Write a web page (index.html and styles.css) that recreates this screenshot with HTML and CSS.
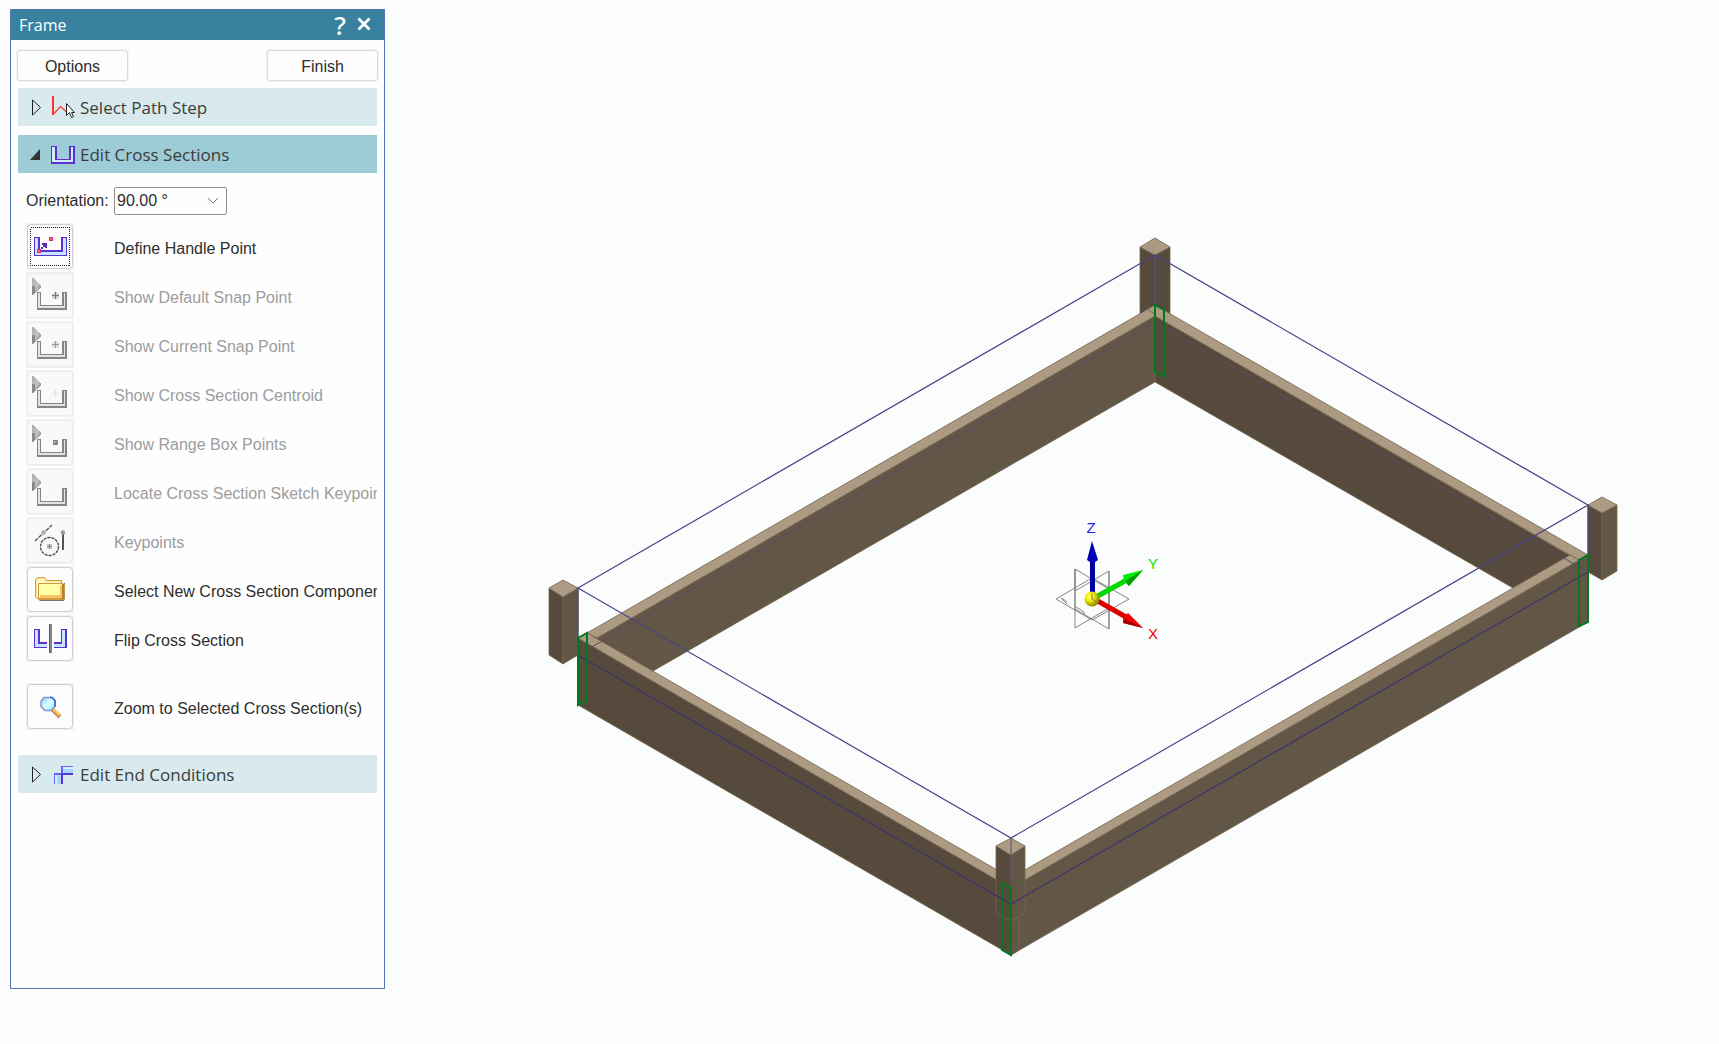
FILE: index.html
```html
<!DOCTYPE html>
<html lang="en">
<head>
<meta charset="utf-8">
<title>Frame</title>
<link rel="stylesheet" href="styles.css">
</head>
<body>
<svg class="defs" aria-hidden="true">
  <defs>
    <linearGradient id="cone" x1="0" x2="1" y1="0" y2="1">
      <stop offset="0" stop-color="#aaa"/><stop offset=".5" stop-color="#c4c4c4"/><stop offset="1" stop-color="#777"/>
    </linearGradient>
    <radialGradient id="ball" cx=".35" cy=".35" r=".7">
      <stop offset="0" stop-color="#ffff70"/><stop offset=".4" stop-color="#f2ee00"/><stop offset="1" stop-color="#857c00"/>
    </radialGradient>
    <linearGradient id="lens" x1="0" x2="1" y1="0" y2="1">
      <stop offset="0" stop-color="#8fd0ff"/><stop offset=".5" stop-color="#d8ffff"/><stop offset="1" stop-color="#8ee8ff"/>
    </linearGradient>
    <symbol id="channel" viewBox="0 0 48 47">
      <path d="M6 6h1l8 8v1l-8 8H6z" fill="url(#cone)"/>
      <path d="M6 14h3v6l-2 3H6z" fill="#8a8a8a"/>
      <path d="M11 20h4v13h21V20h5v18H11z" fill="#858585"/>
      <path d="M12 21h2v13h24V21h1v15H12z" fill="#e4e4e4"/>
    </symbol>
  </defs>
</svg>

<main class="workspace">
  <aside class="panel" aria-label="Frame">
    <header class="titlebar">
      <h1 class="title">Frame</h1>
      <button class="title-button" type="button" aria-label="Help"><span class="help">?</span></button>
      <button class="title-button" type="button" aria-label="Close">
        <svg width="14" height="14" viewBox="0 0 14 14"><path d="M1.500 1.500l11 11M12.500 1.500l-11 11" stroke="#fff" stroke-width="2.800"/></svg>
      </button>
    </header>

    <div class="actions">
      <button class="action" type="button">Options</button>
      <button class="action" type="button">Finish</button>
    </div>

    <div class="steps">
      <button class="step" type="button" aria-expanded="false">
        <svg width="12" height="20" viewBox="0 0 12 20"><path d="M2.500 3v15l8-7.500z" fill="none" stroke="#222"/></svg>
        <svg width="26" height="24" viewBox="0 0 26 24">
          <path d="M2 1h2v19H2z" fill="#ff3030"/>
          <path d="M4 18.500l6.500-7 5.500 5" fill="none" stroke="#ff3030" stroke-width="1.200"/>
          <path d="M16.500 8.500v12l3-3 2 5 2-1-2-4h3z" fill="#fff" stroke="#222"/>
        </svg>
        <span>Select Path Step</span>
      </button>

      <section class="group">
        <button class="step step-open" type="button" aria-expanded="true">
          <svg width="12" height="20" viewBox="0 0 12 20"><path d="M10 5v11H0z" fill="#333"/></svg>
          <svg width="26" height="24" viewBox="0 0 26 24" shape-rendering="crispEdges">
            <path d="M1 4h6v13h12V4h6v18H1z" fill="#5a32d2"/>
            <path d="M2 5h3v13h16V5h2v15H2z" fill="#cdecff"/>
          </svg>
          <span>Edit Cross Sections</span>
        </button>

        <div class="field">
          <label for="orientation">Orientation:</label>
          <div class="combo">
            <select id="orientation"><option>90.00 °</option><option>0.00 °</option></select>
            <svg width="12" height="8" viewBox="0 0 12 8" aria-hidden="true"><path d="M1 1l5 5 5-5" fill="none" stroke="#777"/></svg>
          </div>
        </div>

        <ul class="tools">
          <li class="tool">
            <button class="tool-button" id="t1" type="button" aria-labelledby="l1">
              <svg viewBox="0 0 48 47" shape-rendering="crispEdges">
                <rect x="4.500" y="4.500" width="39" height="38" fill="none" stroke="#222" stroke-dasharray="1 1"/>
                <path d="M8 14h6v13h21V14h6v19H8z" fill="#5a32d2"/>
                <path d="M9 15h3v14h25V15h3v17H9z" fill="#c4e6ff"/>
                <path d="M23 14h4v4h-4zM11 26h4v4h-4z" fill="#c8328c"/>
                <path d="M24 15h2v2h-2zM12 27h2v2h-2z" fill="#f06464"/>
                <path d="M15 24h2v2h-2zM17 22h2v2h-2zM16 20h5v5h-2v-2h-1v-1h-2z" fill="#5a2db4"/>
              </svg>
            </button>
            <label class="tool-label" id="l1" for="t1">Define Handle Point</label>
          </li>
          <li class="tool">
            <button class="tool-button" id="t2" type="button" aria-labelledby="l2" disabled>
              <svg viewBox="0 0 48 47" shape-rendering="crispEdges"><use href="#channel"/>
                <circle cx="29.500" cy="23.500" r="3.500" fill="#d0d0d0"/><path d="M29 20h1v3h3v1h-3v3h-1v-3h-3v-1h3z" fill="#777"/></svg>
            </button>
            <label class="tool-label" id="l2" for="t2">Show Default Snap Point</label>
          </li>
          <li class="tool">
            <button class="tool-button" id="t3" type="button" aria-labelledby="l3" disabled>
              <svg viewBox="0 0 48 47" shape-rendering="crispEdges"><use href="#channel"/>
                <circle cx="29.500" cy="23.500" r="3.500" fill="#dcdcdc"/><path d="M29 20h1v3h3v1h-3v3h-1v-3h-3v-1h3z" fill="#999"/></svg>
            </button>
            <label class="tool-label" id="l3" for="t3">Show Current Snap Point</label>
          </li>
          <li class="tool">
            <button class="tool-button" id="t4" type="button" aria-labelledby="l4" disabled>
              <svg viewBox="0 0 48 47" shape-rendering="crispEdges"><use href="#channel"/>
                <path d="M29 20h1v3h3v1h-3v3h-1v-3h-3v-1h3z" fill="#e0e0e0"/></svg>
            </button>
            <label class="tool-label" id="l4" for="t4">Show Cross Section Centroid</label>
          </li>
          <li class="tool">
            <button class="tool-button" id="t5" type="button" aria-labelledby="l5" disabled>
              <svg viewBox="0 0 48 47" shape-rendering="crispEdges"><use href="#channel"/>
                <path d="M27 21h5v5h-5z" fill="#858585"/><path d="M28 22h2v2h-2z" fill="#aaa"/></svg>
            </button>
            <label class="tool-label" id="l5" for="t5">Show Range Box Points</label>
          </li>
          <li class="tool">
            <button class="tool-button" id="t6" type="button" aria-labelledby="l6" disabled>
              <svg viewBox="0 0 48 47" shape-rendering="crispEdges"><use href="#channel"/></svg>
            </button>
            <label class="tool-label" id="l6" for="t6">Locate Cross Section Sketch Keypoints</label>
          </li>
          <li class="tool">
            <button class="tool-button" id="t7" type="button" aria-labelledby="l7" disabled>
              <svg viewBox="0 0 48 47">
                <path d="M9 24L26 8" stroke="#555" stroke-width="1.300" stroke-dasharray="4 1"/>
                <circle cx="23.500" cy="29.500" r="9" fill="none" stroke="#444" stroke-width="1.300" stroke-dasharray="3 1"/>
                <path d="M21 27h5v5h-5z" fill="#ccc"/><path d="M23 27h1v5h-1zM21 29h5v1h-5z" fill="#888"/>
                <circle cx="17.500" cy="15.500" r="2.200" fill="#aaa"/>
                <path d="M36 17h2v16h-2z" fill="#555"/><circle cx="37" cy="15.500" r="2.200" fill="#999"/>
              </svg>
            </button>
            <label class="tool-label" id="l7" for="t7">Keypoints</label>
          </li>
          <li class="tool">
            <button class="tool-button" id="t8" type="button" aria-labelledby="l8">
              <svg viewBox="0 0 48 47">
                <path d="M13 34h25V17h1v15l-1 3H14z" fill="#777"/>
                <path d="M9.500 31V14l2-2.500h7l2 3h15v4h2.500v15h-25z" fill="#ffe9a0" stroke="#d59a3c"/>
                <path d="M11 31V14l2-1h4l3 3h15v2H12v13z" fill="#fff8c0"/>
                <path d="M12.500 17.500h24l2 1-1 14h-25z" fill="#ffffa8" stroke="#d09a40"/>
                <path d="M34 19h2v13H14v-3h20z" fill="#f5c468"/><path d="M36 18h2v15h-2z" fill="#b5852e"/>
              </svg>
            </button>
            <label class="tool-label" id="l8" for="t8">Select New Cross Section Component</label>
          </li>
          <li class="tool">
            <button class="tool-button" id="t9" type="button" aria-labelledby="l9">
              <svg viewBox="0 0 48 47" shape-rendering="crispEdges">
                <path d="M8 14h6v13h7v6H8zM41 14h-6v13h-7v6h13z" fill="#5a32d2"/>
                <path d="M9 15h3v14h9v3H9zM39 15h-3v14h-8v3h11z" fill="#c4e6ff"/>
                <path d="M23 9h3v29h-3z" fill="#858585"/><path d="M23 9h1v29h-1z" fill="#a03278"/>
              </svg>
            </button>
            <label class="tool-label" id="l9" for="t9">Flip Cross Section</label>
          </li>
          <li class="tool tool-apart">
            <button class="tool-button" id="t10" type="button" aria-labelledby="l10">
              <svg viewBox="0 0 48 47">
                <path d="M26 26l8 8" stroke="#a88090" stroke-width="4"/>
                <path d="M27 26l7 7" stroke="#ffb428" stroke-width="3"/><path d="M28 26l5 5" stroke="#fff0a0"/>
                <path d="M18 14.500h8l3 3v6l-4 4h-6l-4-4v-5z" fill="url(#lens)" stroke="#8a90c8" stroke-width="1.500"/>
                <path d="M24 14.500h2l3 3v6" fill="none" stroke="#3060e0" stroke-width="1.500"/>
              </svg>
            </button>
            <label class="tool-label" id="l10" for="t10">Zoom to Selected Cross Section(s)</label>
          </li>
        </ul>
      </section>

      <button class="step" type="button" aria-expanded="false">
        <svg width="12" height="20" viewBox="0 0 12 20"><path d="M2.500 3v15l8-7.500z" fill="none" stroke="#222"/></svg>
        <svg width="26" height="24" viewBox="0 0 26 24" shape-rendering="crispEdges">
          <path d="M13 5h10v6H13zM5 13h6v9H5z" fill="#a8d2ff"/>
          <path d="M13 5h10v2H13zM5 13h2v9H5z" fill="#d5f0ff"/>
          <path d="M11 4h12v1H11zM11 4h2v9h-2zM4 11h7v2H4zM4 11h1v11H4z" fill="#6464ff"/>
          <path d="M11 11h12v2H13v9h-2z" fill="#5a32d2"/>
        </svg>
        <span>Edit End Conditions</span>
      </button>
    </div>
  </aside>

  <svg class="view" viewBox="385 0 1334 1044" role="img" aria-label="Wooden frame model with four posts">
    <g stroke="#75644f" stroke-width=".8" stroke-linejoin="round">
      <!-- back post -->
      <path class="dark" d="M1140 247l15 8v70h-15zM1155 255l15-8v75h-15z"/>
      <path class="top" d="M1155 238l15 9-15 8-15-8z"/>
      <!-- back rails -->
      <path class="light" d="M1155 316v66L653 671l-66-32z"/>
      <path class="dark" d="M1155 316v66l358 206 58-32z"/>
      <path class="top" d="M1155 305L587 633l10 5 558-322z"/>
      <path class="top" d="M1155 305l433 250-9 5-424-244z"/>
      <path d="M1147 309l9 6" fill="none"/>
      <!-- side posts -->
      <path class="dark" d="M549 588l14 9v67l-14-9z"/>
      <path class="light" d="M563 597l15-9v67l-15 9z"/>
      <path class="top" d="M563 580l15 8-15 9-14-9z"/>
      <path class="dark" d="M1588 505l14 8v67l-14-8z"/>
      <path class="light" d="M1602 513l15-8v66l-15 9z"/>
      <path class="top" d="M1602 497l15 8-15 8-14-8z"/>
      <!-- front rails -->
      <path class="dark" d="M578 638l433 250v67L578 705z"/>
      <path class="light" d="M1588 555v67l-577 333v-67z"/>
      <path class="top" d="M587 633l424 245v10L578 638z"/>
      <path class="top" d="M1570 555l9 5-568 328v-10z"/>
      <!-- front post -->
      <path class="dark" d="M996 846l15 9v66l-15-8z"/>
      <path class="light" d="M1011 855l14-9v67l-14 8zM1011 921v34l8-5v-34z"/>
      <path class="top" d="M1011 838l14 8-14 9-15-9z"/>
    </g>
    <g fill="none" stroke="#4b4286" stroke-width="1.200">
      <path d="M1155 255L578 588l433 250 577-333zM1155 255v50M578 588v50M1588 505v50"/>
      <path d="M578 655l433 249 577-332" stroke="#40316e"/>
      <path d="M578 655l577-333 433 250M1011 838v66" stroke="#5b4b66" stroke-width="1"/>
    </g>
    <g fill="none" stroke="#007a1c" stroke-width="2">
      <path d="M1155 305l9 5v66l-9-4zM578 638l9-5v67l-9 5zM1579 560l9-5v67l-9 4zM1002 883l9 5v67l-9-5z"/>
    </g>
    <g fill="none" stroke="#858585">
      <path d="M1056 599l36-21 37 21-37 21zM1075 569l34 20v40l-34-20zM1075 569v59l34-20v-37l-34 20zM1109 571v58M1061 598l6 6M1067 602l-5-4M1076 607l8 5v3"/>
    </g>
    <g>
      <path d="M1090 560h5v37h-5z" fill="#0000a0"/><path d="M1092 541l6 19-3 2h-5l-3-2z" fill="#0000b4"/>
      <path d="M1096 597l29-16" stroke="#00d800" stroke-width="5"/><path d="M1143 570l-20 5 1 6 5 5z" fill="#00ee00"/>
      <path d="M1129 586l14-16-18 11z" fill="#009b00"/>
      <path d="M1096 600l30 17" stroke="#e00000" stroke-width="5"/><path d="M1143 628l-20-5v-5l5-5z" fill="#ee0000"/>
      <path d="M1123 623l20 5-18-9z" fill="#a00000"/>
      <circle cx="1092" cy="599" r="7.500" fill="url(#ball)"/>
      <path d="M1092 599v-5M1092 599l4 3" stroke="#777"/>
    </g>
    <g class="axis" text-anchor="middle">
      <text x="1091" y="533" fill="#2020ee">Z</text>
      <text x="1153" y="569" fill="#00e800">Y</text>
      <text x="1153" y="639" fill="#ee0000">X</text>
    </g>
  </svg>
</main>
</body>
</html>
```
FILE: styles.css
```css
* { box-sizing: border-box; }

body {
  margin: 0;
  background: #fbfdfc;
  color: #2e2e2e;
  font: 16px/20px "Liberation Sans", Arial, sans-serif;
}

button, select { font: inherit; color: inherit; }
svg { display: block; }
.defs { position: absolute; width: 0; height: 0; }

.workspace {
  display: flex;
  min-height: 100vh;
}

.panel {
  flex: none;
  width: 375px;
  margin: 9px 0 55px 10px;
  border: 1px solid #5079b4;
  background: #fefefe;
}

.titlebar {
  display: flex;
  align-items: center;
  gap: 10px;
  height: 30px;
  padding: 0 13px 0 8px;
  background: #38829f;
  color: #fff;
}
.title {
  flex: 1;
  margin: 0;
  font: 16px/30px "Open Sans", "Noto Sans", sans-serif;
}
.title-button {
  display: grid;
  place-items: center;
  min-width: 14px;
  height: 30px;
  padding: 0;
  border: 0;
  background: none;
}
.title-button svg { margin-bottom: 2px; }
.help { font: 500 26px/28px "Noto Sans", sans-serif; }

.actions {
  display: flex;
  justify-content: space-between;
  padding: 9px 5px 6px;
}
.action {
  width: 113px;
  height: 33px;
  padding: 2px 6px 0;
  border: 2px solid #dadada;
  border-radius: 5px;
  background: #fdfdfd;
  outline: 1px solid #f3f3f3;
  outline-offset: -1px;
}

.steps { padding: 0 7px; }
.step {
  display: flex;
  align-items: center;
  width: 100%;
  height: 38px;
  padding: 0 12px;
  border: 0;
  background: #d8eaed;
  color: #3c3c3c;
  font: 17px/24px "Open Sans", "Noto Sans", sans-serif;
  text-align: left;
}
.step svg { flex: none; }
.step svg:first-child { margin-right: 8px; }
.step span {
  margin-left: 4px;
  padding-top: 1px;
  white-space: nowrap;
}
.step-open { background: #9dccd6; }

.group { margin: 9px 0 25px; }

.field {
  display: flex;
  align-items: center;
  padding: 14px 8px 8px;
}
.field label { width: 88px; }
.combo {
  display: grid;
  align-items: center;
  width: 113px;
}
.combo > * { grid-area: 1 / 1; }
.combo select {
  width: 100%;
  height: 28px;
  padding: 0 2px;
  border: 1px solid #8e8e8e;
  border-radius: 2px;
  background: #fefefe;
  appearance: none;
}
.combo svg {
  justify-self: end;
  margin-right: 8px;
  pointer-events: none;
}

.tools {
  display: grid;
  gap: 2px;
  margin: 0;
  padding: 0 0 0 8px;
  list-style: none;
}
.tool {
  display: flex;
  align-items: center;
  gap: 40px;
  overflow: hidden;
}
.tool-apart { margin-top: 19px; }
.tool-button {
  position: relative;
  flex: none;
  width: 48px;
  height: 47px;
  padding: 0;
  border: 0;
  background: #f2f2f2;
}
.tool-button::before {
  content: "";
  position: absolute;
  inset: 1px;
  border: 1px solid #cfcfcf;
  border-radius: 4px;
  background: #fdfdfd;
}
.tool-button svg {
  position: relative;
  width: 48px;
  height: 47px;
}
.tool-button:disabled::before {
  border-color: #ececec;
  background: #f9f9f9;
}
.tool-label {
  padding-top: 5px;
  white-space: nowrap;
}
.tool-button:disabled + .tool-label { color: #9c9c9c; }

.view {
  flex: 1;
  min-width: 0;
  width: 100%;
  height: 100vh;
}
.view .top { fill: #ac9b82; }
.view .light { fill: #625646; }
.view .dark { fill: #564a3c; }
.axis { font: 15px "Liberation Sans", Arial, sans-serif; }
```
